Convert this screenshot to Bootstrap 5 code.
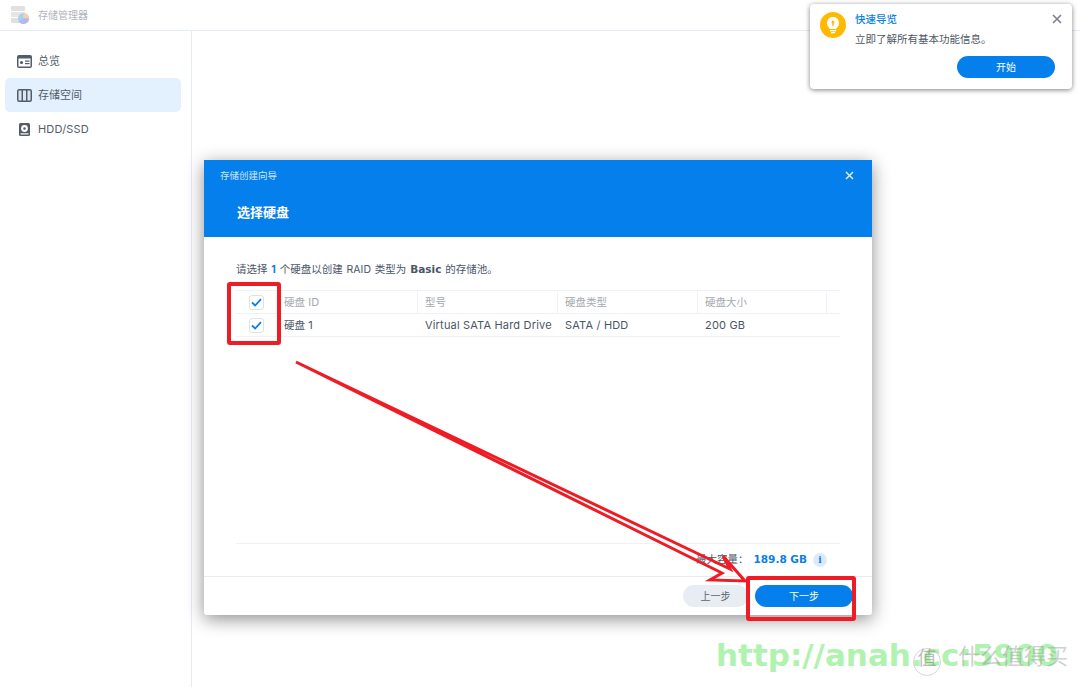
<!DOCTYPE html>
<html lang="zh">
<head>
<meta charset="utf-8">
<title>存储管理器</title>
<link href="https://cdn.jsdelivr.net/npm/bootstrap@5.3.0/dist/css/bootstrap.min.css" rel="stylesheet">
<style>
html,body{height:687px;overflow:hidden;}
body{font-family:Inter,"Noto Sans CJK SC",sans-serif;font-size:11px;color:#4a5568;background:#fff;position:relative;}
.app-head{height:31px;border-bottom:1px solid #e6ecf3;padding-left:11px;gap:9px;color:#b0b4ba;font-size:10px;}
.app-body{height:656px;}
.side{width:192px;border-right:1px solid #e6ecf3;padding:13px 10px 0 5px;gap:0;}
.side-item{height:34px;border-radius:5px;padding-left:12px;gap:6px;font-size:11px;color:#525c6b;}
.side-item.on{background:#e3f0fd;}
.lat{font-size:11px;letter-spacing:.18px;}
.wiz{position:absolute;left:204px;top:160px;width:668px;height:455px;background:#fff;border-radius:3px;box-shadow:0 4px 18px rgba(0,0,0,.45);}
.wiz-head{height:77px;background:#057feb;color:#fff;}
.wiz-title{font-size:9.5px;padding:9px 16px 0;color:#cfe6fb;height:31px;}
.wiz-h{font-size:13px;font-weight:700;padding-left:33px;margin-top:11px;line-height:20px;}
.wiz-x{right:18px;top:11px;}
.wiz-main{padding:24px 32px 0;height:340px;}
.wiz-intro{font-size:10.5px;height:29px;line-height:16px;white-space:nowrap;color:#4a5568;word-spacing:.9px;}
.wiz-intro b{font-family:"DejaVu Sans",sans-serif;font-size:10.5px;}
.blue{color:#0a7fe6;font-weight:700;}
.grid-row{display:flex;align-items:center;border-bottom:1px solid #eef1f5;height:23px;font-size:10.5px;}
.grid-row.hd{border-top:1px solid #eef1f5;height:24px;color:#a5a9b0;}
.c0{width:41px;display:flex;justify-content:center;padding-right:1px;}
.c1,.c2,.c3,.c4{padding-left:7px;padding-top:1px;white-space:nowrap;height:100%;display:flex;align-items:center;gap:.3em;}
.c1{width:141px;}.c2{width:140px;}.c3{width:140px;}.c4{width:129px;}
.hd .c1,.hd .c2,.hd .c3,.hd .c4{border-right:1px solid #eef1f5;}
.tick{width:15px;height:15px;border:1px solid #dde3ea;border-radius:3px;display:flex;align-items:center;justify-content:center;background:#fff;}
.cap{position:absolute;left:32px;right:32px;top:383px;border-top:1px solid #eef1f5;height:33px;gap:5px;padding-right:13px;font-size:10.5px;}
.cap .num{font-family:"DejaVu Sans",sans-serif;font-size:10.5px;color:#0a7fe6;font-weight:700;}
.info{width:14px;height:14px;border-radius:50%;background:#dcebfa;color:#0a7fe6;font-size:9px;font-weight:700;line-height:14px;text-align:center;margin-left:1px;font-family:"DejaVu Serif",serif;}
.wiz-foot{position:absolute;left:0;right:0;bottom:0;height:39px;border-top:1px solid #e8ecf1;padding-right:19px;gap:7px;}
.pill{height:22px;border-radius:11px;border:0;font-size:10px;padding:0;line-height:22px;}
.pill-grey{width:65px;background:#e8edf3;color:#5b6470;}
.pill-blue{width:98px;background:#057feb;color:#fff;}
.toastbox{position:absolute;left:810px;top:4px;width:262px;height:85px;background:#fff;border-radius:4px;box-shadow:0 1px 5px rgba(0,0,0,.5);padding:8px 10px;gap:9px;}
.bulb{width:26px;height:26px;border-radius:50%;background:#ffb900;flex:none;display:flex;align-items:center;justify-content:center;}
.tt{color:#0a7fe6;font-size:10.5px;font-weight:500;line-height:15px;}
.td{font-size:10.5px;line-height:15px;margin-top:5px;color:#4f5763;}
.toast-x{position:absolute;right:10px;top:10px;}
.pill-start{position:absolute;right:17px;top:52px;width:98px;}
.overlay{position:absolute;left:0;top:0;pointer-events:none;}
.wm{position:absolute;left:716px;top:632px;font-family:"DejaVu Sans",sans-serif;font-size:31px;font-weight:700;line-height:46px;color:#b0f2b0;white-space:nowrap;}
.wm2{position:absolute;left:958px;top:642px;font-size:22px;color:rgba(150,150,150,.45);white-space:nowrap;line-height:28px;}
.wm3{position:absolute;left:913px;top:648px;width:28px;height:28px;border-radius:50%;border:1px solid rgba(180,180,180,.55);font-size:19px;line-height:20px;text-align:center;color:rgba(130,130,130,.55);}
</style>
</head>
<body>
<header class="app-head d-flex align-items-center">
  <svg width="18" height="18" viewBox="0 0 18 18"><rect x="0" y="0" width="14" height="5" rx="1" fill="#e0e0e0"/><rect x="0" y="6" width="14" height="5" rx="1" fill="#e6e6e6"/><rect x="0" y="12" width="14" height="5" rx="1" fill="#e0e0e0"/><circle cx="12.5" cy="12.5" r="5.5" fill="#a9d0ef"/><path d="M12.5 12.5V7a5.5 5.5 0 0 1 5.5 5.5z" fill="#f6cfae"/><path d="M12.5 12.5H18a5.5 5.5 0 0 1-10 3z" fill="#b9b5ec"/></svg>
  <span>存储管理器</span>
</header>
<div class="app-body d-flex">
  <nav class="side d-flex flex-column">
    <div class="side-item d-flex align-items-center">
      <svg width="15" height="13" viewBox="0 0 15 13"><rect width="15" height="13" rx="2" fill="#525c6b"/><rect x="1.5" y="3.5" width="12" height="8" fill="#fff"/><circle cx="4.5" cy="7.5" r="1.6" fill="#525c6b"/><rect x="8" y="5.5" width="4.5" height="1.2" fill="#525c6b"/><rect x="8" y="8" width="4.5" height="1.2" fill="#525c6b"/></svg>
      <span>总览</span>
    </div>
    <div class="side-item on d-flex align-items-center">
      <svg width="15" height="13" viewBox="0 0 15 13"><rect x=".75" y=".75" width="13.5" height="11.5" rx="1.5" fill="#dce6f0" stroke="#525c6b" stroke-width="1.5"/><rect x="4.5" y="1" width="1.5" height="11" fill="#525c6b"/><rect x="9" y="1" width="1.5" height="11" fill="#525c6b"/></svg>
      <span>存储空间</span>
    </div>
    <div class="side-item d-flex align-items-center">
      <svg width="15" height="13" viewBox="0 0 15 13"><rect x="2" width="11" height="13" rx="1.5" fill="#525c6b"/><circle cx="7.5" cy="5.5" r="3.4" fill="#fff"/><circle cx="7.5" cy="5.5" r="1.2" fill="#525c6b"/><rect x="3.5" y="10.3" width="8" height="1.2" fill="#fff"/></svg>
      <span class="lat">HDD/SSD</span>
    </div>
  </nav>
  <main class="flex-grow-1"></main>
</div>

<section class="wiz">
  <div class="wiz-head position-relative">
    <div class="wiz-title">存储创建向导</div>
    <div class="wiz-h">选择硬盘</div>
    <svg class="wiz-x position-absolute" width="9" height="9" viewBox="0 0 9 9"><path d="M1 1l7 7M8 1l-7 7" stroke="#dcebfa" stroke-width="1.5"/></svg>
  </div>
  <div class="wiz-main">
    <div class="wiz-intro">请选择 <span class="blue">1</span> 个硬盘以创建 RAID 类型为 <b>Basic</b> 的存储池。</div>
    <div class="grid-row hd">
      <div class="c0"><span class="tick"><svg width="11" height="9" viewBox="0 0 11 9"><path d="M1 4.5l3.2 3L10 1.2" fill="none" stroke="#0a7fe6" stroke-width="1.8"/></svg></span></div>
      <div class="c1"><span>硬盘</span><span class="lat">ID</span></div><div class="c2">型号</div><div class="c3">硬盘类型</div><div class="c4">硬盘大小</div>
    </div>
    <div class="grid-row">
      <div class="c0"><span class="tick"><svg width="11" height="9" viewBox="0 0 11 9"><path d="M1 4.5l3.2 3L10 1.2" fill="none" stroke="#0a7fe6" stroke-width="1.8"/></svg></span></div>
      <div class="c1"><span>硬盘</span><span class="lat">1</span></div><div class="c2"><span class="lat">Virtual SATA Hard Drive</span></div><div class="c3"><span class="lat">SATA / HDD</span></div><div class="c4"><span class="lat">200 GB</span></div>
    </div>
  </div>
  <div class="cap d-flex align-items-center justify-content-end">
    <span>最大容量：</span><span class="num">189.8 GB</span><span class="info">i</span>
  </div>
  <div class="wiz-foot d-flex align-items-center justify-content-end">
    <button class="btn pill pill-grey">上一步</button>
    <button class="btn pill pill-blue">下一步</button>
  </div>
</section>

<aside class="toastbox d-flex">
  <span class="bulb"><svg width="14" height="18" viewBox="0 0 14 18"><path d="M7 1a6 6 0 0 0-3.5 10.9V13h7v-1.1A6 6 0 0 0 7 1z" fill="#fff"/><rect x="4" y="14" width="6" height="1.3" fill="#fff"/><rect x="5" y="16" width="4" height="1.3" fill="#fff"/><circle cx="7" cy="6" r="1.5" fill="#ffb900"/><rect x="6.3" y="6" width="1.4" height="4" fill="#ffb900"/></svg></span>
  <div>
    <div class="tt">快速导览</div>
    <div class="td">立即了解所有基本功能信息。</div>
  </div>
  <svg class="toast-x" width="10" height="10" viewBox="0 0 10 10"><path d="M1 1l8 8M9 1l-8 8" stroke="#7d848d" stroke-width="1.7"/></svg>
  <button class="btn pill pill-blue pill-start">开始</button>
</aside>

<svg class="overlay" width="1080" height="687" viewBox="0 0 1080 687">
  <g fill="none" stroke="#ee1c25" stroke-width="4">
    <rect x="229" y="284" width="50" height="59" rx="1"/>
    <rect x="748" y="578" width="106" height="41" rx="1"/>
  </g>
  <path d="M296 362L730 569 723 556 745 581 710 580 722 573Z" fill="none" stroke="#ee1c25" stroke-width="3" stroke-linejoin="miter"/>
</svg>

<div class="wm">http://anah.cc:5900</div>
<div class="wm3">值</div>
<div class="wm2">什么值得买</div>
</body>
</html>
